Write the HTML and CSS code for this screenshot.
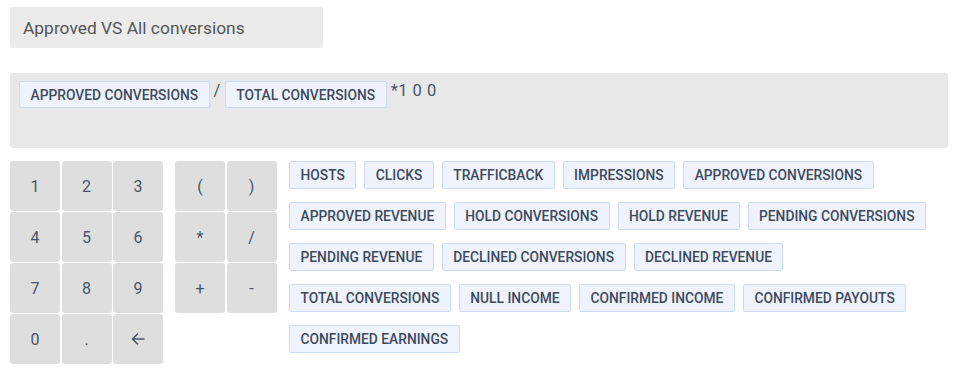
FILE: index.html
```html
<!DOCTYPE html>
<html lang="en">
  <head>
    <meta charset="UTF-8" />
    <meta name="viewport" content="width=device-width, initial-scale=1.0" />
    <title>Formula editor</title>
    <link rel="stylesheet" href="styles.css">
  </head>
  <body>
    <div class="name-field">Approved VS All conversions</div>

    <div class="formula">
      <span class="chip">APPROVED CONVERSIONS</span>
      <span class="op">/</span>
      <span class="chip">TOTAL CONVERSIONS</span>
      <span class="op">*1 0 0</span>
    </div>

    <div class="editor">
      <div class="keypad digits">
        <button class="key">1</button>
        <button class="key">2</button>
        <button class="key">3</button>
        <button class="key">4</button>
        <button class="key">5</button>
        <button class="key">6</button>
        <button class="key">7</button>
        <button class="key">8</button>
        <button class="key">9</button>
        <button class="key">0</button>
        <button class="key">.</button>
        <button class="key">
          <svg width="16" height="16" viewBox="0 0 16 16" fill="none" stroke="currentColor" stroke-width="1.6" stroke-linecap="round" stroke-linejoin="round">
            <path d="M14 8H2.5M7.5 3L2.5 8l5 5" />
          </svg>
        </button>
      </div>
      <div class="keypad ops">
        <button class="key">(</button>
        <button class="key">)</button>
        <button class="key">*</button>
        <button class="key">/</button>
        <button class="key">+</button>
        <button class="key">-</button>
      </div>
      <div class="metrics">
        <span class="chip">HOSTS</span>
        <span class="chip">CLICKS</span>
        <span class="chip">TRAFFICBACK</span>
        <span class="chip">IMPRESSIONS</span>
        <span class="chip">APPROVED CONVERSIONS</span>
        <span class="chip">APPROVED REVENUE</span>
        <span class="chip">HOLD CONVERSIONS</span>
        <span class="chip">HOLD REVENUE</span>
        <span class="chip">PENDING CONVERSIONS</span>
        <span class="chip">PENDING REVENUE</span>
        <span class="chip">DECLINED CONVERSIONS</span>
        <span class="chip">DECLINED REVENUE</span>
        <span class="chip">TOTAL CONVERSIONS</span>
        <span class="chip">NULL INCOME</span>
        <span class="chip">CONFIRMED INCOME</span>
        <span class="chip">CONFIRMED PAYOUTS</span>
        <span class="chip">CONFIRMED EARNINGS</span>
      </div>
    </div>
  </body>
</html>
```

FILE: styles.css
```css
body {
  font-family: Roboto, "Liberation Sans", sans-serif;
  margin: 0;
  padding: 7px 9px 0 10px;
  color: #3d4a5c;
  background: #fff;
}
.name-field {
  width: 313px;
  height: 41px;
  box-sizing: border-box;
  padding: 0 13px;
  display: flex;
  align-items: center;
  background: #ebebeb;
  border-radius: 2px;
  font-size: 17.4px;
  color: #555;
}
.formula {
  margin-top: 25px;
  height: 75px;
  box-sizing: border-box;
  padding: 8px 9px;
  background: #e8e8e8;
  border-radius: 3px;
  display: flex;
  align-items: flex-start;
  gap: 4px;
}
.formula .op {
  font-size: 16.5px;
  line-height: 20px;
  color: #4a5568;
  letter-spacing: 0.5px;
}
.chip {
  display: inline-flex;
  align-items: center;
  height: 28px;
  box-sizing: border-box;
  padding: 0 10.5px;
  background: #eef3fd;
  border: 1px solid #cbdaf6;
  border-radius: 2px;
  font-size: 13.8px;
  font-weight: 500;
  color: #3d4a5c;
  white-space: nowrap;
}
.formula .chip {
  height: 27px;
}
.editor {
  margin-top: 13px;
  display: flex;
  align-items: flex-start;
}
.keypad {
  display: grid;
  grid-auto-rows: 50px;
  gap: 1px 1.5px;
  margin-right: 12px;
}
.digits {
  grid-template-columns: repeat(3, 50px);
}
.ops {
  grid-template-columns: repeat(2, 50px);
  margin-right: 12.5px;
}
.key {
  border: none;
  border-radius: 3px;
  background: #dedede;
  color: #4a5568;
  font-family: Roboto, "Liberation Sans", sans-serif;
  font-size: 16px;
  padding: 0;
  display: flex;
  align-items: center;
  justify-content: center;
  cursor: pointer;
}
.metrics {
  flex: 1;
  display: flex;
  flex-wrap: wrap;
  gap: 13px 8px;
}
```
